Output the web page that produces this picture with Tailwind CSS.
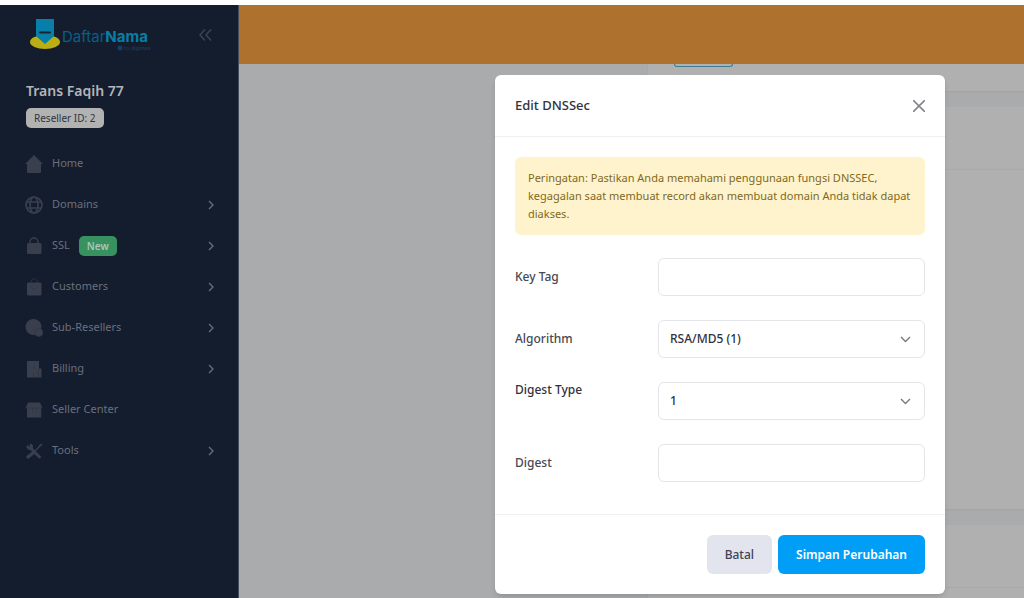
<!DOCTYPE html>
<html lang="id" dir="ltr">
  <head>
    <meta charset="UTF-8" />
    <meta name="viewport" content="width=device-width, initial-scale=1.0" />
    <title>DaftarNama - Edit DNSSec</title>
    <script src="https://cdn.jsdelivr.net/npm/@tailwindcss/browser@4"></script>
  </head>

  <body class="relative flex h-screen flex-col overflow-hidden bg-white pt-[5px] font-['Noto_Sans','Open_Sans',sans-serif] text-xs">
    <div class="flex min-h-0 flex-1">
      <!-- Sidebar -->
      <aside class="flex w-[239px] shrink-0 flex-col border-r border-[#454c5c] bg-[#141d2d] text-[#6b6f7d]">
        <div class="flex items-center justify-between pt-3 pr-[25px] pl-[29px]">
          <a href="#" aria-label="DaftarNama">
            <svg class="h-[35px] w-[124px]" viewBox="0 0 124 35">
              <ellipse cx="16" cy="25" rx="15" ry="7" fill="#b9ae13" />
              <path d="M7 2h18v17l-9 8-9-8z" fill="#087fa8" />
              <rect x="10" y="14.500" width="12" height="2" rx="1" fill="#17242f" />
              <text x="33" y="25" font-size="15" font-family="Inter, sans-serif" fill="#075f8a">Daftar<tspan font-weight="700" fill="#087fa8">Nama</tspan></text>
              <circle cx="91" cy="31" r="2.500" fill="#143e66" />
              <text x="95" y="33" font-size="5" font-family="Inter, sans-serif" fill="#1c3858">by <tspan font-weight="700">digimax</tspan></text>
            </svg>
          </a>
          <button type="button" aria-label="Collapse menu" class="text-[#3c4354]">
            <svg class="h-4 w-4" viewBox="0 0 16 16" fill="none" stroke="currentColor" stroke-width="1.500"><path d="M8 2.500 3 8l5 5.500M14 2.500 9 8l5 5.500" /></svg>
          </button>
        </div>

        <div class="px-[26px] pt-[27px]">
          <h2 class="text-sm leading-6 font-semibold text-[#b3b5b9]">Trans Faqih 77</h2>
          <span class="mt-[5px] inline-block rounded-[5px] bg-[#b2b2b2] px-2 text-[10px] leading-5 text-[#30343e]">Reseller ID: 2</span>
        </div>

        <nav class="mt-[15px] flex flex-col pr-[21px] pl-[25px] text-[11px]">
          <a href="#" class="flex h-[41px] items-center gap-[9px]">
            <svg class="h-[18px] w-[18px] text-[#3a3f4d]" viewBox="0 0 18 18" fill="currentColor"><path d="M9 0 0 9h2v7.500c0 1 .5 1.500 1.500 1.500h11c1 0 1.500-.5 1.500-1.500V9h2z" /></svg>
            Home
          </a>
          <a href="#" class="flex h-[41px] items-center gap-[9px]">
            <svg class="h-[18px] w-[18px] text-[#3a3f4d]" viewBox="0 0 18 18" fill="none" stroke="currentColor" stroke-width="1.700"><circle cx="9" cy="9" r="8" /><ellipse cx="9" cy="9" rx="4" ry="8" /><path d="M1.500 6h15M1.500 12h15" /></svg>
            <span class="flex-1">Domains</span>
            <svg class="h-3 w-3" viewBox="0 0 12 12" fill="none" stroke="currentColor" stroke-width="1.300"><path d="m4 2 4 4-4 4" /></svg>
          </a>
          <a href="#" class="flex h-[41px] items-center gap-[9px]">
            <svg class="h-[18px] w-[18px] text-[#3a3f4d]" viewBox="0 0 18 18" fill="currentColor"><rect x="2" y="6" width="14.500" height="11" rx="1.500" /><path d="M5 7V5a4 4 0 0 1 8 0v2" fill="none" stroke="currentColor" stroke-width="1.500" /></svg>
            <span class="flex flex-1 items-center gap-[9px]">SSL <span class="rounded-[5px] bg-[#379260] px-2 text-[10px] leading-5 font-semibold text-[#b0c4b7]">New</span></span>
            <svg class="h-3 w-3" viewBox="0 0 12 12" fill="none" stroke="currentColor" stroke-width="1.300"><path d="m4 2 4 4-4 4" /></svg>
          </a>
          <a href="#" class="flex h-[41px] items-center gap-[9px]">
            <svg class="h-[18px] w-[18px] text-[#3a3f4d]" viewBox="0 0 18 18" fill="currentColor"><path d="M3.500 4.500h11.500a1.500 1.500 0 0 1 1.500 1.500V16a1.500 1.500 0 0 1-1.500 1.500H3.500A1.500 1.500 0 0 1 2 16V6a1.500 1.500 0 0 1 1.500-1.500" /><path d="M6 4.500c0-5 6.500-5 6.500 0" fill="none" stroke="#2c3242" /><path d="M6 8c0 4 6.500 4 6.500 0" fill="none" stroke="#333846" /></svg>
            <span class="flex-1">Customers</span>
            <svg class="h-3 w-3" viewBox="0 0 12 12" fill="none" stroke="currentColor" stroke-width="1.300"><path d="m4 2 4 4-4 4" /></svg>
          </a>
          <a href="#" class="flex h-[41px] items-center gap-[9px]">
            <svg class="h-[18px] w-[18px] text-[#3a3f4d]" viewBox="0 0 18 18" fill="currentColor"><circle cx="8.500" cy="8" r="8" /><circle cx="13.800" cy="13.500" r="4" stroke="#313644" stroke-width=".8" /></svg>
            <span class="flex-1">Sub-Resellers</span>
            <svg class="h-3 w-3" viewBox="0 0 12 12" fill="none" stroke="currentColor" stroke-width="1.300"><path d="m4 2 4 4-4 4" /></svg>
          </a>
          <a href="#" class="flex h-[41px] items-center gap-[9px]">
            <svg class="h-[18px] w-[18px] text-[#3a3f4d]" viewBox="0 0 18 18" fill="currentColor"><path d="M2 1h12v7.500h2.500V17.500H2z" /><path d="M13.500 9v8M8.500 13v4M9 5v4" fill="none" stroke="#313644" /></svg>
            <span class="flex-1">Billing</span>
            <svg class="h-3 w-3" viewBox="0 0 12 12" fill="none" stroke="currentColor" stroke-width="1.300"><path d="m4 2 4 4-4 4" /></svg>
          </a>
          <a href="#" class="flex h-[41px] items-center gap-[9px]">
            <svg class="h-[18px] w-[18px] text-[#3a3f4d]" viewBox="0 0 18 18" fill="currentColor"><path d="M3 1.500h12L17 6c0 1-.3 1.500-.8 1.700v8.800H2V7.700C1.500 7.500 1 7 1 6z" /><path d="M2 7h14.500M7.500 7v5M11.500 7v5" fill="none" stroke="#313644" stroke-width=".8" /></svg>
            Seller Center
          </a>
          <a href="#" class="flex h-[41px] items-center gap-[9px]">
            <svg class="h-[18px] w-[18px] text-[#3a3f4d]" viewBox="0 0 18 18" fill="none" stroke="currentColor" stroke-linecap="round"><path d="M5 5.500 14.500 15" stroke-width="3" /><path d="M3 15 8 11" stroke-width="3.500" /><path d="m9.500 9.500 6-6" stroke-width="1.200" /><path d="M15 3.500 16.500 2.500" stroke-width="1.700" /><path d="m2.500 3.500-.5 2C3 8 7 8 7.500 5.500 8 3 6.500 2 5 2l.8 2.500-1.300 1.300z" fill="currentColor" stroke-width="1" /></svg>
            <span class="flex-1">Tools</span>
            <svg class="h-3 w-3" viewBox="0 0 12 12" fill="none" stroke="currentColor" stroke-width="1.300"><path d="m4 2 4 4-4 4" /></svg>
          </a>
        </nav>
      </aside>

      <!-- Page behind the dialog -->
      <div class="flex min-w-0 flex-1 flex-col bg-[#a9abad]">
        <header class="h-[59px] shrink-0 bg-[#af712e]"></header>
        <main class="flex min-h-0 flex-1 flex-col gap-4 pl-[409px]">
          <section class="h-[27px] shrink-0 bg-[#b0b0b0] pl-[26px] shadow-xs">
            <div class="h-[3px] w-[59px] rounded-b border border-t-0 border-[#3f7b92]"></div>
          </section>
          <section class="h-[402px] shrink-0 bg-[#b0b0b0] shadow-xs">
            <div class="h-[63px] border-b border-[#a8a9ab]"></div>
          </section>
          <section class="h-24 shrink-0 bg-[#b0b0b0] shadow-xs">
            <div class="h-[63px] border-b border-[#a8a9ab]"></div>
          </section>
        </main>
      </div>
    </div>

    <!-- Edit DNSSec dialog -->
    <div class="absolute inset-0 flex items-start justify-end pt-[75px] pr-[79px]">
      <form role="dialog" aria-modal="true" aria-labelledby="modal-title" autocomplete="off" class="w-[450px] rounded-md bg-white text-[#464852] shadow-md">
        <div class="flex h-[62px] items-center justify-between border-b border-[#eff0f3] px-5">
          <h1 id="modal-title" class="text-[13px] font-medium text-[#30323e]">Edit DNSSec</h1>
          <button type="button" aria-label="Close" class="text-[#85858a]">
            <svg class="h-3 w-3" viewBox="0 0 12 12" fill="none" stroke="currentColor" stroke-width="1.600"><path d="m0 0 12 12M12 0 0 12" /></svg>
          </button>
        </div>

        <div class="px-5 pt-5 pb-8">
          <p role="alert" class="rounded-md bg-[#fff3cd] px-[13px] py-3 text-[11px] leading-[18px] text-[#80691a]">
            Peringatan: Pastikan Anda memahami penggunaan fungsi DNSSEC, kegagalan saat membuat record akan membuat domain Anda tidak dapat diakses.
          </p>

          <div class="mt-[23px] grid grid-cols-[143px_1fr] items-center gap-y-6 font-medium">
            <label for="key-tag">Key Tag</label>
            <input id="key-tag" type="text" class="h-[38px] w-full rounded-md border border-[#e4e6ea] px-3" />

            <label for="algorithm">Algorithm</label>
            <div class="relative">
              <select id="algorithm" class="h-[38px] w-full appearance-none rounded-md border border-[#e4e6ea] px-[11px] text-[#30323e]">
                <option>RSA/MD5 (1)</option>
              </select>
              <svg class="pointer-events-none absolute top-3 right-3 h-3.5 w-3.5 text-[#777980]" viewBox="0 0 14 14" fill="none" stroke="currentColor" stroke-width="1.400"><path d="m2 5 4.500 4.500L11 5" /></svg>
            </div>

            <label for="digest-type" class="self-start text-[#30323e]">Digest Type</label>
            <div class="relative">
              <select id="digest-type" class="h-[38px] w-full appearance-none rounded-md border border-[#e4e6ea] px-[11px] text-[#30323e]">
                <option>1</option>
              </select>
              <svg class="pointer-events-none absolute top-3 right-3 h-3.5 w-3.5 text-[#777980]" viewBox="0 0 14 14" fill="none" stroke="currentColor" stroke-width="1.400"><path d="m2 5 4.500 4.500L11 5" /></svg>
            </div>

            <label for="digest">Digest</label>
            <input id="digest" type="text" class="h-[38px] w-full rounded-md border border-[#e4e6ea] px-3" />
          </div>
        </div>

        <div class="flex justify-end gap-1.5 border-t border-[#eff0f3] p-5">
          <button type="button" class="h-[39px] rounded-md bg-[#e3e5ee] px-[18px] font-medium text-[#3f4254]">Batal</button>
          <button type="submit" class="h-[39px] rounded-md bg-[#009ef7] px-[18px] font-semibold text-white">Simpan Perubahan</button>
        </div>
      </form>
    </div>
  </body>
</html>
